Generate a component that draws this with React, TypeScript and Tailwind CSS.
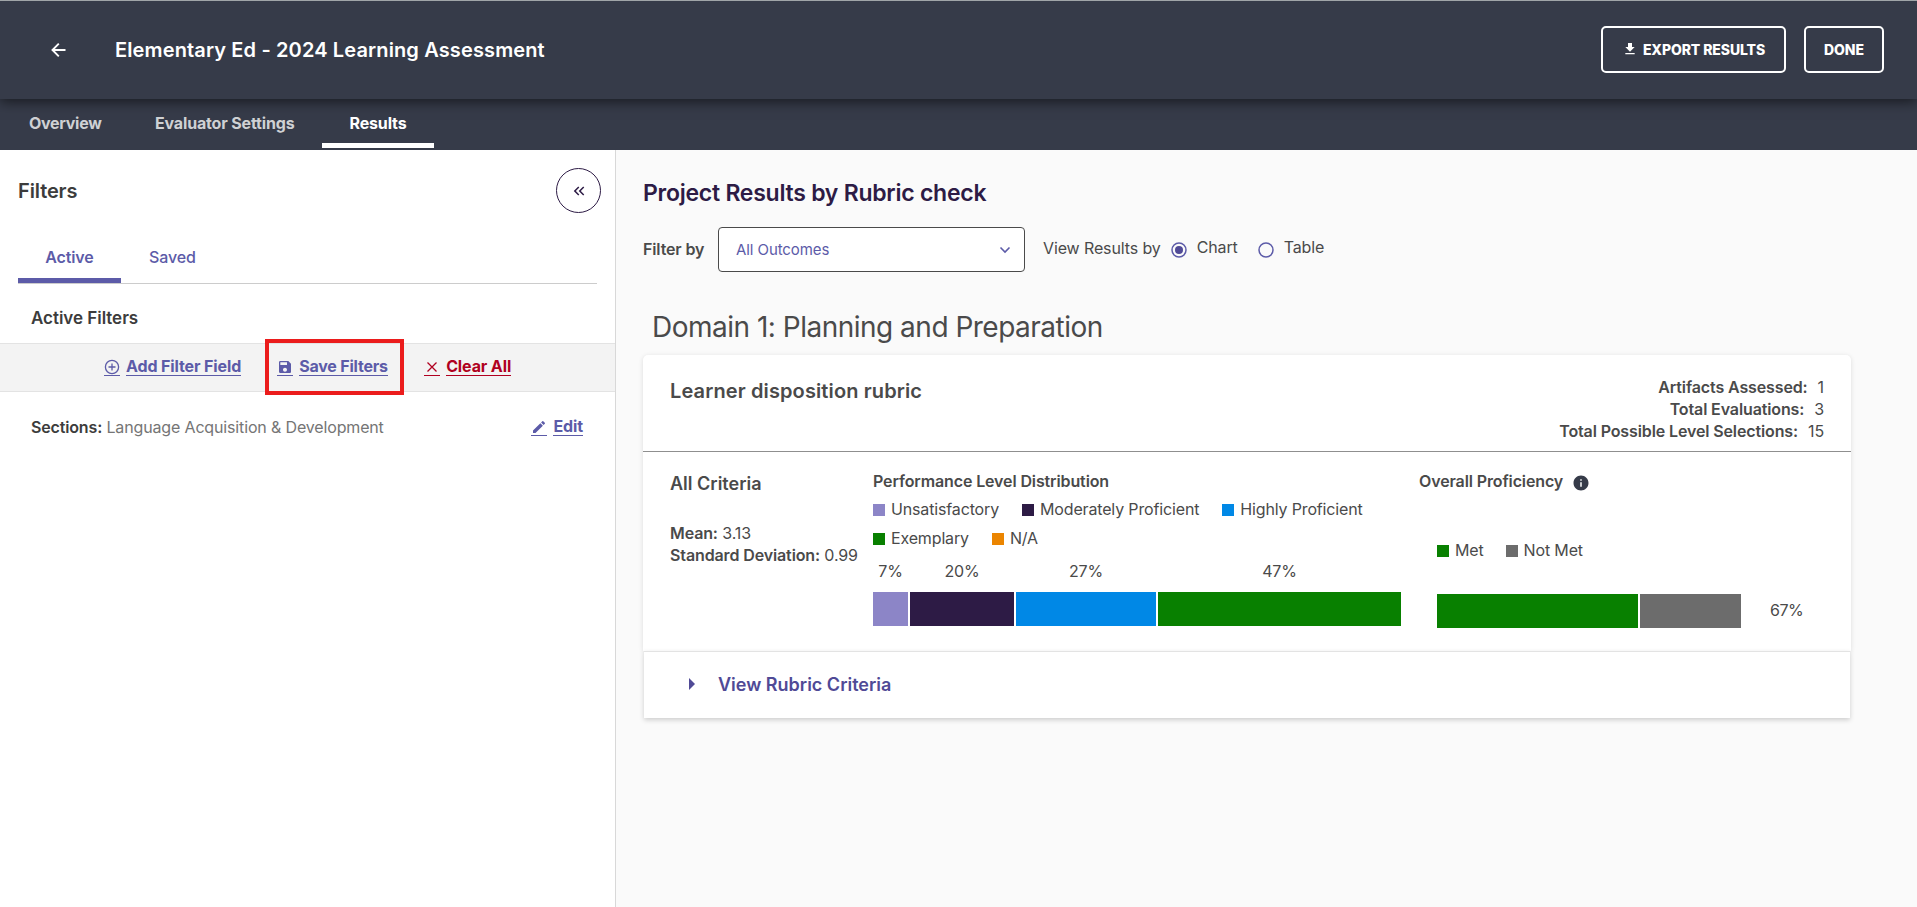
import type { ReactNode } from 'react';
import { MdDownload, MdEdit, MdInfo, MdKeyboardDoubleArrowLeft, MdSave } from 'react-icons/md';

const levels = [
  { label: 'Unsatisfactory', color: 'bg-[#8c85c7]', pct: '7%', width: 35 },
  { label: 'Moderately Proficient', color: 'bg-[#2d1b45]', pct: '20%', width: 104 },
  { label: 'Highly Proficient', color: 'bg-[#0088e6]', pct: '27%', width: 140 },
  { label: 'Exemplary', color: 'bg-[#088000]', pct: '47%', width: 243 },
  { label: 'N/A', color: 'bg-[#eb8500]', pct: '', width: 0 },
];

const totals = [
  ['Artifacts Assessed:', '1'],
  ['Total Evaluations:', '3'],
  ['Total Possible Level Selections:', '15'],
];

function Legend({ color, label }: { color: string; label: string }) {
  return (
    <div className="flex items-center gap-[6px]">
      <span className={`mt-px size-3 ${color}`} />
      <span className="leading-[29px] tracking-[-0.15px]">{label}</span>
    </div>
  );
}

function LinkButton({ icon, label, className = '' }: { icon: ReactNode; label: string; className?: string }) {
  return (
    <button className={`flex h-[19px] gap-[6px] font-bold leading-[17px] ${className}`}>
      <span className="flex h-[18px] w-4 items-center justify-center border-b border-current">{icon}</span>
      <span className="h-[18px] border-b border-current">{label}</span>
    </button>
  );
}

function Header() {
  return (
    <header className="relative z-10 flex h-[99px] items-center border-t border-[#a0a5a8] bg-[#363b49] pr-[33px] text-white shadow-[0_3px_12px_rgba(0,0,0,0.55)]">
      <svg viewBox="0 0 20 20" className="ml-[49px] size-5" fill="none" stroke="currentColor" strokeWidth="1.9">
        <path d="M16.5 10H4M9.8 3.7L3.5 10l6.3 6.3" />
      </svg>
      <h1 className="ml-[46px] text-[20px] font-semibold tracking-[0.13px]">Elementary Ed - 2024 Learning Assessment</h1>
      <div className="mb-[2px] ml-auto flex gap-[18px] text-[14px] font-extrabold tracking-[-0.1px]">
        <button className="flex h-[47px] w-[185px] items-center justify-center gap-[5px] rounded-[5px] border-2 border-white">
          <MdDownload className="mb-px size-4" />
          EXPORT RESULTS
        </button>
        <button className="h-[47px] w-[80px] rounded-[5px] border-2 border-white">DONE</button>
      </div>
    </header>
  );
}

function Sidebar() {
  return (
    <aside className="w-[616px] shrink-0 border-r border-[#d8d8d8] bg-white">
      <div className="flex items-start justify-between pt-[18px] pr-[14px] pl-[18px]">
        <h2 className="text-[20px] font-semibold leading-[46px] text-[#3c3c3c]">Filters</h2>
        <button className="flex size-[45px] items-center justify-center rounded-full border border-[#2d1b45] text-[#2d1b45]">
          <MdKeyboardDoubleArrowLeft className="size-[18px]" />
        </button>
      </div>

      <div className="mr-[18px] ml-[18px] mt-[18px] flex h-[52px] border-b border-[#ccc] leading-[50px] text-[#5c5ba8]">
        <span className="h-[51px] w-[103px] border-b-[5px] border-[#5c5ba8] text-center font-semibold">Active</span>
        <span className="ml-[28px] font-medium">Saved</span>
      </div>

      <h3 className="ml-[31px] mt-[22px] text-[17px] font-semibold leading-[24px] tracking-[-0.03px] text-[#3c3c3c]">Active Filters</h3>

      <div className="mt-[13px] flex h-[49px] items-center border-y border-[#e3e3e3] bg-[#f3f3f3] pl-[104px] text-[#5c5ba8]">
        <LinkButton
          label="Add Filter Field"
          icon={
            <svg viewBox="0 0 16 16" className="size-4" fill="none" stroke="currentColor" strokeWidth="1.3">
              <circle cx="8" cy="8" r="6.6" />
              <path d="M8 4.5v7M4.5 8h7" />
            </svg>
          }
        />
        <div className="mb-px ml-[24px] flex h-[56px] w-[139px] shrink-0 items-center border-4 border-[#eb1c1c] pt-px pl-[8px]">
          <LinkButton className="tracking-[-0.2px]" label="Save Filters" icon={<MdSave className="size-4" />} />
        </div>
        <LinkButton
          className="ml-5 text-[#b00020]"
          label="Clear All"
          icon={
            <svg viewBox="0 0 16 16" className="size-4" fill="none" stroke="currentColor" strokeWidth="1.3">
              <path d="M3.5 3.5l9 9M12.5 3.5l-9 9" />
            </svg>
          }
        />
      </div>

      <div className="mt-[25px] flex justify-between pr-8 pl-[31px] leading-[21px]">
        <p className="tracking-[-0.15px] text-[#757575]">
          <b className="font-semibold text-[#3c3c3c]">Sections:</b> Language Acquisition &amp; Development
        </p>
        <LinkButton className="mt-px text-[#5c5ba8]" label="Edit" icon={<MdEdit className="size-4" />} />
      </div>
    </aside>
  );
}

function Radio({ checked = false }) {
  return (
    <span className="mt-px flex size-4 items-center justify-center rounded-full">
      <svg viewBox="0 0 16 16" className="size-4" fill="none">
        <circle cx="8" cy="8" r="7" stroke="#5c5ba8" strokeWidth="1.5" />
        {checked && <circle cx="8" cy="8" r="4" fill="#504a96" />}
      </svg>
    </span>
  );
}

function RubricCard() {
  return (
    <section className="w-[1208px]">
      <div className="rounded-t-[5px] bg-white shadow-[0_1px_5px_rgba(0,0,0,0.12)]">
        <div className="flex h-[97px] justify-between border-b border-[#8f8f8f] pr-[27px] pl-[27px]">
          <h3 className="mt-[22px] text-[20px] font-semibold leading-[28px] tracking-[0.12px]">Learner disposition rubric</h3>
          <div className="mt-[21px] text-right leading-[22px]">
            {totals.map(([label, value]) => (
              <p key={label}>
                <b className="mr-[10px] font-semibold">{label}</b>
                {value}
              </p>
            ))}
          </div>
        </div>

        <div className="flex h-[199px] pl-[27px]">
          <div className="w-[203px] shrink-0 whitespace-nowrap">
            <h4 className="mt-5 text-[18px] font-semibold leading-[24px] tracking-normal">All Criteria</h4>
            <p className="mt-[26px] leading-[22px]"><b className="font-semibold">Mean:</b> 3.13</p>
            <p className="leading-[22px]"><b className="font-semibold">Standard Deviation:</b> 0.99</p>
          </div>

          <div className="w-[528px] shrink-0">
            <h4 className="mt-[18px] font-semibold leading-[22px]">Performance Level Distribution</h4>
            <div className="mt-[3px] flex flex-wrap gap-x-[23px]">
              {levels.map((level) => (
                <Legend key={level.label} color={level.color} label={level.label} />
              ))}
            </div>
            <div className="mt-[7px] flex gap-[2px]">
              {levels.filter((level) => level.width > 0).map((level) => (
                <div key={level.label} style={{ width: level.width }}>
                  <div className="text-center leading-[22px]">{level.pct}</div>
                  <div className={`mt-[10px] h-[34px] ${level.color}`} />
                </div>
              ))}
            </div>
          </div>

          <div className="ml-[18px]">
            <h4 className="mt-[18px] flex gap-[9px] font-semibold leading-[22px]">
              Overall Proficiency
              <MdInfo className="mt-[4px] size-[18px] text-[#363b49]" />
            </h4>
            <div className="ml-[18px] mt-[44px] flex gap-[22px]">
              <Legend color="bg-[#088000]" label="Met" />
              <Legend color="bg-[#6c6c6c]" label="Not Met" />
            </div>
            <div className="ml-[18px] mt-[29px] flex items-center gap-[2px]">
              <div className="h-[34px] w-[201px] bg-[#088000]" />
              <div className="h-[34px] w-[101px] bg-[#6c6c6c]" />
              <span className="mb-[2px] ml-[27px] tracking-[-0.5px]">67%</span>
            </div>
          </div>
        </div>
      </div>

      <div className="mx-px flex h-[67px] items-center border-t border-[#e3e3e3] bg-white pb-[2px] pl-[36px] text-[18px] font-semibold tracking-normal text-[#504a96] shadow-[0_2px_5px_rgba(0,0,0,0.18)]">
        <svg viewBox="0 0 24 24" className="size-6" fill="currentColor">
          <path d="M9 6v12l6-6z" />
        </svg>
        <span className="ml-[14px]">View Rubric Criteria</span>
      </div>
    </section>
  );
}

export default function App() {
  return (
    <div className="flex h-[907px] flex-col overflow-hidden bg-[#fafafa] font-['Inter',sans-serif] text-[16px] tracking-[-0.12px] text-[#4a4a4a]">
      <Header />

      <nav className="flex h-[51px] shrink-0 bg-[#363b49] font-bold leading-[48px] tracking-[-0.16px] text-[#cfd1d4]">
        <span className="ml-[29px] w-[126px] tracking-[-0.28px]">Overview</span>
        <span className="w-[167px]">Evaluator Settings</span>
        <span className="h-[49px] w-[112px] border-b-[5px] border-white text-center text-white">Results</span>
      </nav>

      <div className="flex min-h-0 flex-1">
        <Sidebar />

        <main className="flex-1 pl-[27px]">
          <h2 className="mt-[26px] text-[23px] font-semibold leading-[34px] tracking-[-0.25px] text-[#2d1b45]">Project Results by Rubric check</h2>

          <div className="mt-[17px] flex items-center">
            <b className="mb-px w-[75px] font-semibold">Filter by</b>
            <button className="flex h-[45px] w-[307px] items-center justify-between rounded-[4px] border border-[#4a4a4a] bg-white pr-[13px] pl-[17px] text-[15px] text-[#5c5ba8]">
              <span className="mt-px tracking-[-0.08px]">All Outcomes</span>
              <svg viewBox="0 0 12 12" className="size-3" fill="none" stroke="currentColor" strokeWidth="1.6">
                <path d="M1.5 3.5L6 8l4.5-4.5" />
              </svg>
            </button>
            <span className="mb-[3px] ml-[18px] mr-[10px]">View Results by</span>
            <Radio checked />
            <span className="mb-[5px] ml-[10px] mr-5">Chart</span>
            <Radio />
            <span className="mb-[5px] ml-[10px]">Table</span>
          </div>

          <h1 className="ml-[9px] mt-[35px] mb-[8px] text-[28px] leading-[40px] tracking-[-0.5px]">Domain 1: Planning and Preparation</h1>

          <RubricCard />
        </main>
      </div>
    </div>
  );
}
